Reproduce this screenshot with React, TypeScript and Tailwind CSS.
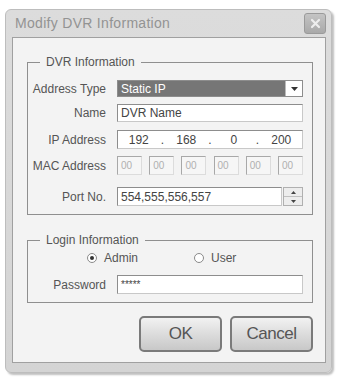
import React from "react";

const font = { fontFamily: '"Liberation Sans", Arial, sans-serif' };

const Row: React.FC<{ label: string; className?: string; children: React.ReactNode }> = ({
  label,
  className = "",
  children,
}) => (
  <div className={`flex items-center ${className}`}>
    <span className="w-[78px] text-right text-[12px] leading-[14px] text-[#555]">{label}</span>
    <div className="ml-[11px] w-[186px]">{children}</div>
  </div>
);

const sunken = "border border-[#8d8d8d] border-r-[#c8c8c8] border-b-[#c8c8c8] bg-white";

const Radio: React.FC<{ checked?: boolean; label: string; className?: string }> = ({ checked, label, className = "" }) => (
  <div className={`flex items-center ${className}`}>
    <span className="w-[10px] h-[10px] rounded-full border border-[#8a8a8a] bg-white flex items-center justify-center">
      {checked && <span className="w-[4px] h-[4px] rounded-full bg-[#333]" />}
    </span>
    <span className="ml-[7px] text-[12px] leading-[14px] text-[#555]">{label}</span>
  </div>
);

export default function App() {
  const ip = ["192", "168", "0", "200"];
  const mac = ["00", "00", "00", "00", "00", "00"];
  return (
    <div className="w-[337px] h-[379px] bg-white pt-[9px] pl-[5px]" style={font}>
      <div className="w-[327px] h-[364px] rounded-[6px] border border-[#bdbdbd] bg-gradient-to-b from-[#dcdcdc] to-[#d4d4d4] flex flex-col shadow-[2px_2px_2px_rgba(0,0,0,0.25)]">
        <div className="h-[27px] flex items-center justify-between pl-[9px] pr-[5px]">
          <span className="text-[14px] tracking-[0.3px] text-[#939393]">Modify DVR Information</span>
          <div className="w-[22px] h-[21px] rounded-[3px] border border-[#9a9a9a] bg-gradient-to-b from-[#c4c4c4] to-[#a9a9a9] flex items-center justify-center">
            <svg width="11" height="11" viewBox="0 0 11 11">
              <path d="M2 2 L9 9 M9 2 L2 9" stroke="#eeeeee" strokeWidth="2.2" strokeLinecap="round" />
            </svg>
          </div>
        </div>

        <div className="ml-[6px] mr-[5px] mb-[9px] flex-1 border border-[#a0a0a0] bg-[#f3f3f3] pt-[17px]">
          <fieldset className="ml-[14px] mr-[12px] border border-[#8f8f8f] px-0 pb-[8px] min-w-0">
            <legend className="ml-[12px] px-[6px] text-[12px] leading-[14px] text-[#555]">DVR Information</legend>
            <Row label="Address Type" className="mt-[11px]">
              <div className="h-[17px] flex border border-[#8d8d8d] bg-white">
                <div className="flex-1 bg-[#767676] flex items-center pl-[3px] text-[12px] text-white leading-[14px]">
                  Static IP
                </div>
                <div className="w-[17px] flex items-center justify-center border-l border-[#bbb]">
                  <svg width="7" height="4" viewBox="0 0 7 4">
                    <path d="M0 0 H7 L3.5 4 Z" fill="#333" />
                  </svg>
                </div>
              </div>
            </Row>
            <Row label="Name" className="mt-[7px]">
              <div className={`h-[18px] flex items-center pl-[3px] text-[12px] leading-[14px] text-[#444] ${sunken}`}>
                DVR Name
              </div>
            </Row>
            <Row label="IP Address" className="mt-[8px]">
              <div className={`h-[19px] flex items-center text-[12px] leading-[14px] text-[#444] ${sunken}`}>
                {ip.map((v, i) => (
                  <React.Fragment key={i}>
                    {i > 0 && <span className="w-[6px] text-center">.</span>}
                    <span className="flex-1 text-center">{v}</span>
                  </React.Fragment>
                ))}
              </div>
            </Row>
            <Row label="MAC Address" className="mt-[7px]">
              <div className="flex justify-between">
                {mac.map((v, i) => (
                  <div
                    key={i}
                    className="w-[25px] h-[19px] border border-[#a8a8a8] border-r-[#dcdcdc] border-b-[#dcdcdc] bg-[#f6f6f6] text-[10px] leading-[17px] pl-[3px] text-[#b0b0b0]"
                  >
                    {v}
                  </div>
                ))}
              </div>
            </Row>
            <Row label="Port No." className="mt-[12px]">
              <div className="flex h-[19px]">
                <div className={`flex-1 flex items-center pl-[3px] text-[12px] leading-[14px] text-[#444] ${sunken}`}>
                  554,555,556,557
                </div>
                <div className="w-[20px] ml-[1px] flex flex-col border border-[#b0b0b0] bg-[#ededed]">
                  <div className="flex-1 flex items-center justify-center border-b border-[#c0c0c0]">
                    <svg width="5" height="3" viewBox="0 0 5 3">
                      <path d="M0 3 H5 L2.5 0 Z" fill="#444" />
                    </svg>
                  </div>
                  <div className="flex-1 flex items-center justify-center">
                    <svg width="5" height="3" viewBox="0 0 5 3">
                      <path d="M0 0 H5 L2.5 3 Z" fill="#444" />
                    </svg>
                  </div>
                </div>
              </div>
            </Row>
          </fieldset>

          <fieldset className="mt-[18px] ml-[14px] mr-[12px] border border-[#8f8f8f] px-0 pb-[8px] min-w-0">
            <legend className="ml-[12px] px-[6px] text-[12px] leading-[14px] text-[#555]">Login Information</legend>
            <div className="flex mt-[4px] pl-[59px]">
              <Radio checked label="Admin" className="w-[107px]" />
              <Radio label="User" />
            </div>
            <Row label="Password" className="mt-[10px]">
              <div className={`h-[19px] flex items-center pl-[3px] text-[10px] leading-[12px] text-[#444] ${sunken}`}>
                *****
              </div>
            </Row>
          </fieldset>

          <div className="mt-[13px] mr-[12px] flex justify-end gap-[8px]">
            {["OK", "Cancel"].map((t) => (
              <div
                key={t}
                className="w-[83px] h-[36px] rounded-[5px] border-2 border-[#7a7a7a] bg-gradient-to-b from-[#f2f2f2] via-[#dcdcdc] to-[#c8c8c8] flex items-center justify-center text-[17px] text-[#555] tracking-[-0.5px]"
              >
                {t}
              </div>
            ))}
          </div>
        </div>
      </div>
    </div>
  );
}
